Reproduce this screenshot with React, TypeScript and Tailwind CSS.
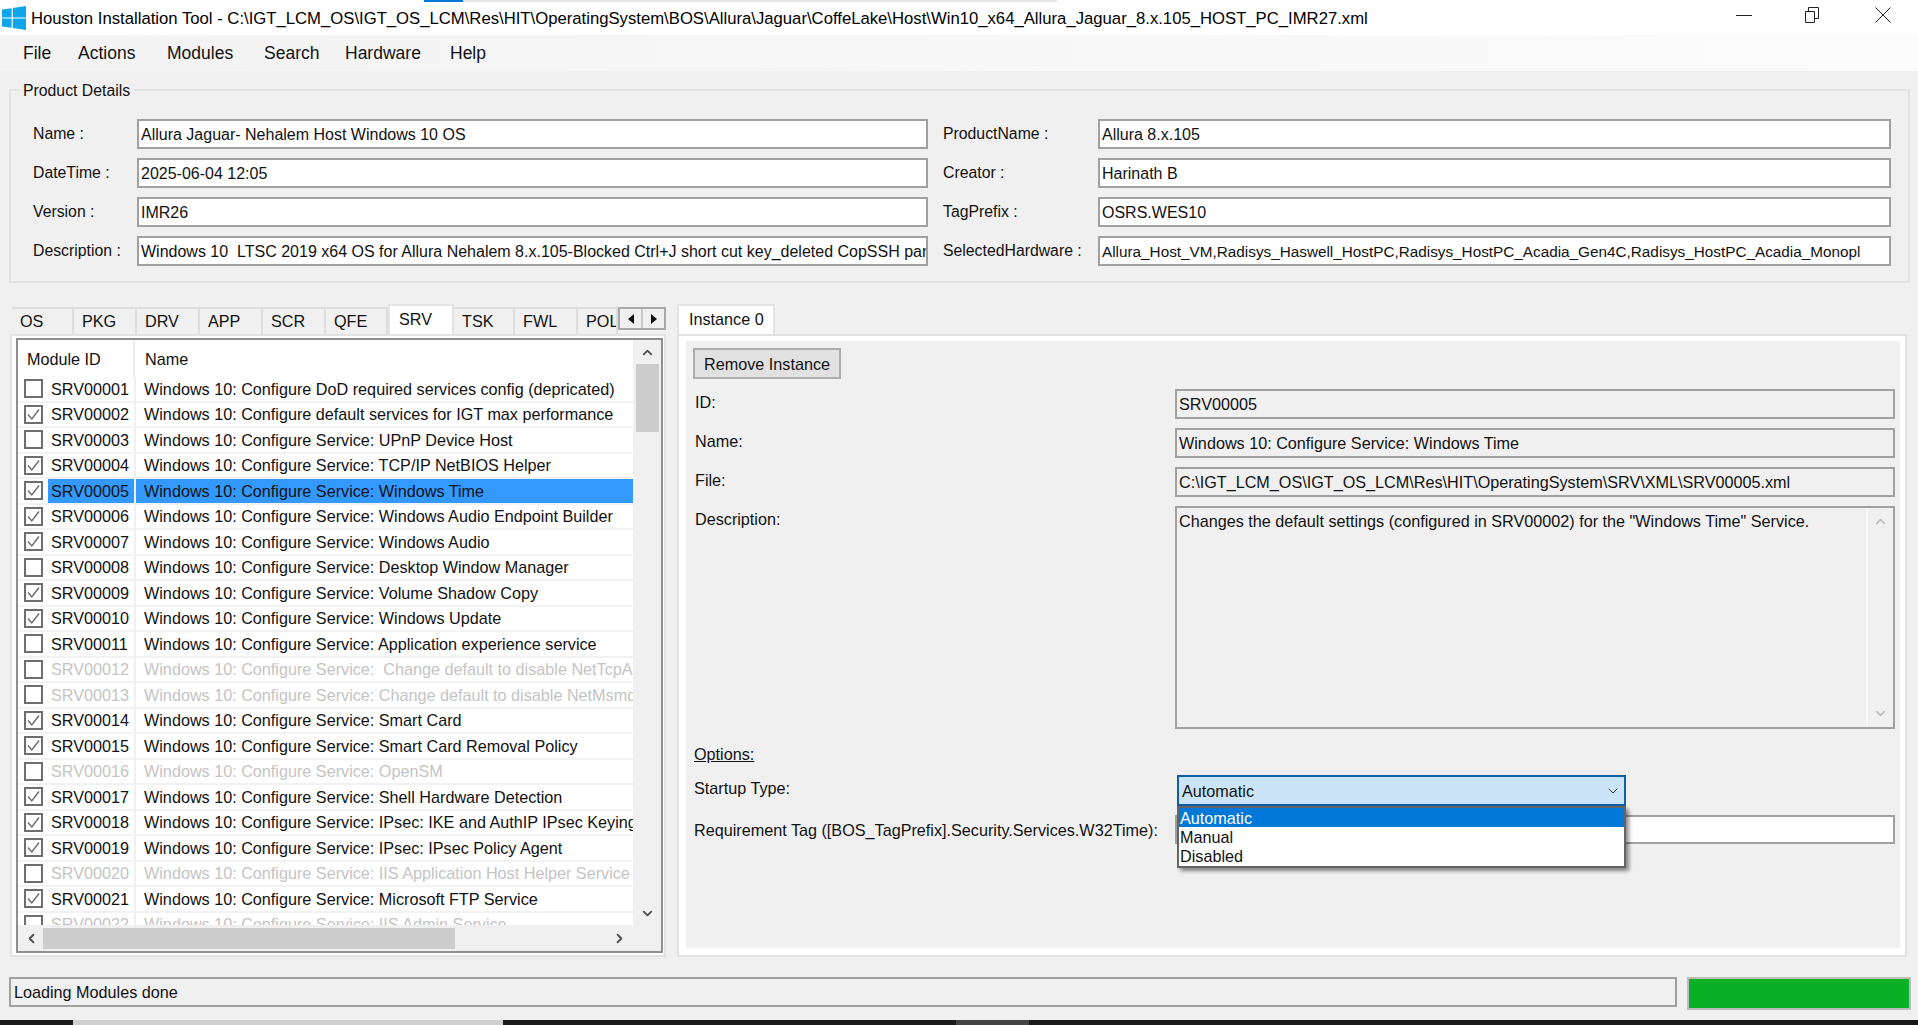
import { ChevronDown, ChevronLeft, ChevronRight, ChevronUp } from "lucide-react"

const menus = ["File", "Actions", "Modules", "Search", "Hardware", "Help"]

const leftFields = [
  ["Name :", "Allura Jaguar- Nehalem Host Windows 10 OS"],
  ["DateTime :", "2025-06-04 12:05"],
  ["Version :", "IMR26"],
  ["Description :", "Windows 10  LTSC 2019 x64 OS for Allura Nehalem 8.x.105-Blocked Ctrl+J short cut key_deleted CopSSH par"],
]

const rightFields = [
  ["ProductName :", "Allura 8.x.105"],
  ["Creator :", "Harinath B"],
  ["TagPrefix :", "OSRS.WES10"],
  ["SelectedHardware :", "Allura_Host_VM,Radisys_Haswell_HostPC,Radisys_HostPC_Acadia_Gen4C,Radisys_HostPC_Acadia_Monopl"],
]

const tabs = [
  { label: "OS", width: "w-[62px]" },
  { label: "PKG", width: "w-[63px]" },
  { label: "DRV", width: "w-[63px]" },
  { label: "APP", width: "w-[63px]" },
  { label: "SCR", width: "w-[63px]" },
  { label: "QFE", width: "w-[62px]" },
  { label: "SRV", width: "w-[66px]", active: true },
  { label: "TSK", width: "w-[61px]" },
  { label: "FWL", width: "w-[63px]" },
  { label: "POL", width: "w-[40px]" },
]

const P = "Windows 10: Configure Service: "

const modules = [
  { id: "SRV00001", name: "Windows 10: Configure DoD required services config (depricated)" },
  { id: "SRV00002", name: "Windows 10: Configure default services for IGT max performance", checked: true },
  { id: "SRV00003", name: P + "UPnP Device Host" },
  { id: "SRV00004", name: P + "TCP/IP NetBIOS Helper", checked: true },
  { id: "SRV00005", name: P + "Windows Time", checked: true, selected: true },
  { id: "SRV00006", name: P + "Windows Audio Endpoint Builder", checked: true },
  { id: "SRV00007", name: P + "Windows Audio", checked: true },
  { id: "SRV00008", name: P + "Desktop Window Manager" },
  { id: "SRV00009", name: P + "Volume Shadow Copy", checked: true },
  { id: "SRV00010", name: P + "Windows Update", checked: true },
  { id: "SRV00011", name: P + "Application experience service" },
  { id: "SRV00012", name: P + " Change default to disable NetTcpActivator", disabled: true },
  { id: "SRV00013", name: P + "Change default to disable NetMsmqActivator", disabled: true },
  { id: "SRV00014", name: P + "Smart Card", checked: true },
  { id: "SRV00015", name: P + "Smart Card Removal Policy", checked: true },
  { id: "SRV00016", name: P + "OpenSM", disabled: true },
  { id: "SRV00017", name: P + "Shell Hardware Detection", checked: true },
  { id: "SRV00018", name: P + "IPsec: IKE and AuthIP IPsec Keying Modules", checked: true },
  { id: "SRV00019", name: P + "IPsec: IPsec Policy Agent", checked: true },
  { id: "SRV00020", name: P + "IIS Application Host Helper Service", disabled: true },
  { id: "SRV00021", name: P + "Microsoft FTP Service", checked: true },
  { id: "SRV00022", name: P + "IIS Admin Service", disabled: true },
]

function Field({ label, value, labelWidth, width }: { label: string; value: string; labelWidth: string; width: string }) {
  const tight = value.length > 90 && value.includes("_Host")
  return (
    <div className="flex h-[30px] items-center">
      <div className={`${labelWidth} shrink-0 pb-[1px] text-[15.8px]`}>{label}</div>
      <div
        className={`${width} ${tight ? "text-[15.3px]" : "text-[16px]"} flex h-[30px] shrink-0 items-center overflow-hidden border-2 border-[#a0a0a0] bg-white pt-[1px] pl-[2px] whitespace-pre`}
      >
        {value}
      </div>
    </div>
  )
}

function ReadOnly({ value }: { value: string }) {
  return (
    <div className="flex h-[30px] items-center overflow-hidden border-2 border-[#a0a0a0] bg-[#f0f0f0] pl-[2px] whitespace-pre">
      {value}
    </div>
  )
}

function CheckBox({ checked }: { checked?: boolean }) {
  return (
    <div className="flex h-[19px] w-[19px] shrink-0 items-center justify-center border-2 border-[#6e6e6e] bg-white">
      {checked && (
        <svg width="15" height="15" viewBox="0 0 15 15" fill="none" stroke="#6a6a6a" strokeWidth="1.4">
          <path d="M2 7.5 L5.8 12 L13 2.5" />
        </svg>
      )}
    </div>
  )
}

export default function App() {
  return (
    <div className="flex h-[1025px] w-[1918px] flex-col overflow-hidden bg-[#f0f0f0] font-['Liberation_Sans',Arial,sans-serif] text-[16.2px] leading-[22px] text-[#111]">
      <div className="relative flex h-[35px] shrink-0 items-center bg-white">
        <div className="absolute top-0 left-[424px] h-[2px] w-[39px] bg-[#0078d7]" />
        <div className="absolute top-0 left-[463px] h-[2px] w-[594px] bg-[#e6e6e6]" />
        <svg className="ml-[2px]" width="24" height="24" viewBox="0 0 24 24" fill="#0ea5e9">
          <path d="M0 3.5 L9.6 2.2 V11.4 H0 Z M10.8 2 L24 0 V11.4 H10.8 Z M0 12.6 H9.6 V21.8 L0 20.5 Z M10.8 12.6 H24 V24 L10.8 22 Z" />
        </svg>
        <div className="ml-[5px] pt-[2px] text-[16.7px] whitespace-nowrap text-black">
          Houston Installation Tool - C:\IGT_LCM_OS\IGT_OS_LCM\Res\HIT\OperatingSystem\BOS\Allura\Jaguar\CoffeLake\Host\Win10_x64_Allura_Jaguar_8.x.105_HOST_PC_IMR27.xml
        </div>
        <div className="ml-auto flex items-center pb-[5px]">
          <svg width="16" height="16" viewBox="0 0 16 16" stroke="#222" fill="none" className="mr-[52px]">
            <path d="M0 8.5 H16" />
          </svg>
          <svg width="16" height="16" viewBox="0 0 16 16" stroke="#222" fill="none" className="mr-[55px]">
            <path d="M1.5 4.5 H10.5 V15.5 H1.5 Z M4.5 4 V0.5 H14.5 V11.5 H11" />
          </svg>
          <svg width="16" height="16" viewBox="0 0 16 16" stroke="#222" fill="none" className="mr-[27px]">
            <path d="M0.5 0.5 L15.5 15.5 M15.5 0.5 L0.5 15.5" />
          </svg>
        </div>
      </div>

      <div className="flex h-[36px] shrink-0 items-center bg-gradient-to-r from-[#f3f3f3] to-[#fbfbfb] pl-[23px] text-[17.5px]">
        {menus.map((m, i) => (
          <div key={m} className={["w-[55px]", "w-[89px]", "w-[97px]", "w-[81px]", "w-[105px]", ""][i]}>
            {m}
          </div>
        ))}
      </div>

      <div className="relative mt-[18px] ml-[9px] h-[194px] w-[1901px] shrink-0 border-2 border-[#e2e2e2] pt-[28px] pl-[22px]">
        <div className="absolute -top-[11px] left-[8px] bg-[#f0f0f0] px-[4px] text-[15.8px]">Product Details</div>
        <div className="flex">
          <div className="flex flex-col gap-[9px]">
            {leftFields.map(([l, v]) => (
              <Field key={l} label={l} value={v} labelWidth="w-[104px]" width="w-[791px]" />
            ))}
          </div>
          <div className="ml-[15px] flex flex-col gap-[9px]">
            {rightFields.map(([l, v]) => (
              <Field key={l} label={l} value={v} labelWidth="w-[155px]" width="w-[793px]" />
            ))}
          </div>
        </div>
      </div>

      <div className="mt-[21px] ml-[10px] flex h-[653px] shrink-0">
        <div className="flex w-[656px] shrink-0 flex-col">
          <div className="relative flex h-[30px] shrink-0 items-end pl-[2px]">
            {tabs.map((t) => (
              <div
                key={t.label}
                className={
                  t.active
                    ? `${t.width} flex h-[30px] items-center overflow-hidden border-x-2 border-t-2 border-[#e4e4e4] bg-white pb-[2px] pl-[9px]`
                    : `${t.width} flex h-[27px] items-center overflow-hidden border-t-2 border-r-2 border-[#dddddd] bg-[#f0f0f0] pb-[1px] pl-[8px]`
                }
              >
                {t.label}
              </div>
            ))}
            <div className="absolute top-[3px] right-0 flex h-[23px] w-[48px] border-2 border-[#a9a9a9] bg-[#f0f0f0]">
              <div className="flex flex-1 items-center justify-center border-r-2 border-[#c8c8c8]">
                <svg width="6" height="10" viewBox="0 0 6 10" fill="#111">
                  <path d="M6 0 V10 L0 5 Z" />
                </svg>
              </div>
              <div className="flex flex-1 items-center justify-center">
                <svg width="6" height="10" viewBox="0 0 6 10" fill="#111">
                  <path d="M0 0 V10 L6 5 Z" />
                </svg>
              </div>
            </div>
          </div>

          <div className="flex flex-1 flex-col border-2 border-[#e2e2e2] bg-white pt-[2px] pr-[1px] pb-[2px] pl-[4px]">
            <div className="flex flex-1 flex-col border-2 border-[#8f8f8f] bg-white">
              <div className="flex h-[585px] shrink-0">
                <div className="w-[615px] shrink-0 overflow-hidden">
                  <div className="flex h-[37px] items-center">
                    <div className="flex h-full w-[117px] items-center border-r-2 border-[#eeeeee] pl-[9px]">Module ID</div>
                    <div className="pl-[10px]">Name</div>
                  </div>
                  {modules.map((m) => (
                    <div key={m.id} className={`flex h-[25.5px] border-b-2 border-[#f2f2f2] ${m.disabled ? "text-[#c4c4c4]" : ""}`}>
                      <div className="flex w-[118px] shrink-0 items-center border-r-2 border-[#f0f0f0] pl-[6px]">
                        <CheckBox checked={m.checked} />
                        <div className={`ml-[5px] flex h-full flex-1 items-center pl-[3px] ${m.selected ? "bg-[#3399ff]" : ""}`}>{m.id}</div>
                      </div>
                      <div className={`flex h-full flex-1 items-center overflow-hidden pl-[8px] whitespace-pre ${m.selected ? "bg-[#3399ff]" : ""}`}>
                        {m.name}
                      </div>
                    </div>
                  ))}
                </div>
                <div className="flex flex-1 flex-col items-center bg-[#f0f0f0] text-[#505050]">
                  <div className="flex h-[24px] shrink-0 items-center justify-center">
                    <ChevronUp size={15} strokeWidth={3} />
                  </div>
                  <div className="h-[68px] w-[23px] bg-[#cdcdcd]" />
                  <div className="mt-auto flex h-[24px] items-center justify-center">
                    <ChevronDown size={15} strokeWidth={3} />
                  </div>
                </div>
              </div>
              <div className="flex flex-1 items-center bg-[#f0f0f0] text-[#505050]">
                <div className="flex w-[25px] justify-center pl-[2px]">
                  <ChevronLeft size={15} strokeWidth={3} />
                </div>
                <div className="h-[21px] w-[412px] bg-[#cdcdcd]" />
                <div className="ml-[152px] flex w-[25px] justify-center">
                  <ChevronRight size={15} strokeWidth={3} />
                </div>
              </div>
            </div>
          </div>
        </div>

        <div className="ml-[11px] flex w-[1230px] shrink-0 flex-col">
          <div className="flex h-[30px] w-[98px] shrink-0 items-center border-x-2 border-t-2 border-[#e4e4e4] bg-white pb-[2px] pl-[10px]">Instance 0</div>
          <div className="flex-1 border-2 border-[#e2e2e2] bg-white pt-[5px] pr-[5px] pb-[7px] pl-[7px]">
            <div className="relative h-full bg-[#f0f0f0] pt-[7px] pr-[4px] pl-[7px]">
              <div className="flex h-[31px] w-[148px] items-center justify-center border-2 border-[#adadad] bg-[#e1e1e1]">Remove Instance</div>
              <div className="mt-[10px] grid grid-cols-[482px_720px] gap-y-[9px]">
                <div className="pt-[2px] pl-[2px]">ID:</div>
                <ReadOnly value="SRV00005" />
                <div className="pt-[2px] pl-[2px]">Name:</div>
                <ReadOnly value="Windows 10: Configure Service: Windows Time" />
                <div className="pt-[2px] pl-[2px]">File:</div>
                <ReadOnly value="C:\IGT_LCM_OS\IGT_OS_LCM\Res\HIT\OperatingSystem\SRV\XML\SRV00005.xml" />
                <div className="pt-[2px] pl-[2px]">Description:</div>
                <div className="flex h-[223px] border-2 border-[#a0a0a0]">
                  <div className="flex-1 pt-[2px] pl-[2px]">Changes the default settings (configured in SRV00002) for the "Windows Time" Service.</div>
                  <div className="flex w-[27px] flex-col items-center justify-between border-l-2 border-[#f8f8f8] py-[6px] text-[#c0c0c0]">
                    <ChevronUp size={15} strokeWidth={3} />
                    <ChevronDown size={15} strokeWidth={3} />
                  </div>
                </div>
              </div>
              <div className="mt-[14px] pl-[1px] underline">Options:</div>
              <div className="mt-[12px] pl-[1px]">Startup Type:</div>
              <div className="mt-[16px] grid grid-cols-[482px_720px] items-center">
                <div className="pl-[1px] whitespace-nowrap">Requirement Tag ([BOS_TagPrefix].Security.Services.W32Time):</div>
                <div className="h-[29px] border-2 border-[#a0a0a0] bg-white" />
              </div>

              <div className="absolute top-[434px] left-[491px] w-[449px]">
                <div className="flex h-[31px] items-center justify-between border-2 border-[#0d5fa8] bg-[#cce4f7] pr-[3px] pl-[3px]">
                  Automatic
                  <ChevronDown size={16} strokeWidth={1.5} className="text-[#333]" />
                </div>
                <div className="border-2 border-[#646464] bg-white shadow-[3px_3px_4px_rgba(0,0,0,0.45)]">
                  <div className="flex h-[19px] items-center bg-[#0078d7] pl-[1px] text-white">Automatic</div>
                  <div className="flex h-[19.5px] items-center pl-[1px]">Manual</div>
                  <div className="flex h-[19.5px] items-center pl-[1px]">Disabled</div>
                </div>
              </div>
            </div>
          </div>
        </div>
      </div>

      <div className="mt-[20px] ml-[9px] flex shrink-0 items-start">
        <div className="flex h-[30px] w-[1668px] items-center border-2 border-[#a0a0a0] pl-[3px]">Loading Modules done</div>
        <div className="ml-[10px] h-[33px] w-[224px] border-2 border-[#bcbcbc] bg-[#06b025]" />
      </div>

      <div className="relative mt-auto h-[5px] shrink-0 bg-[#1a1a1a]">
        <div className="absolute top-0 left-[73px] h-full w-[430px] bg-[#cfcfcf]" />
        <div className="absolute top-0 left-[956px] h-full w-[73px] bg-[#444444]" />
      </div>
    </div>
  )
}
